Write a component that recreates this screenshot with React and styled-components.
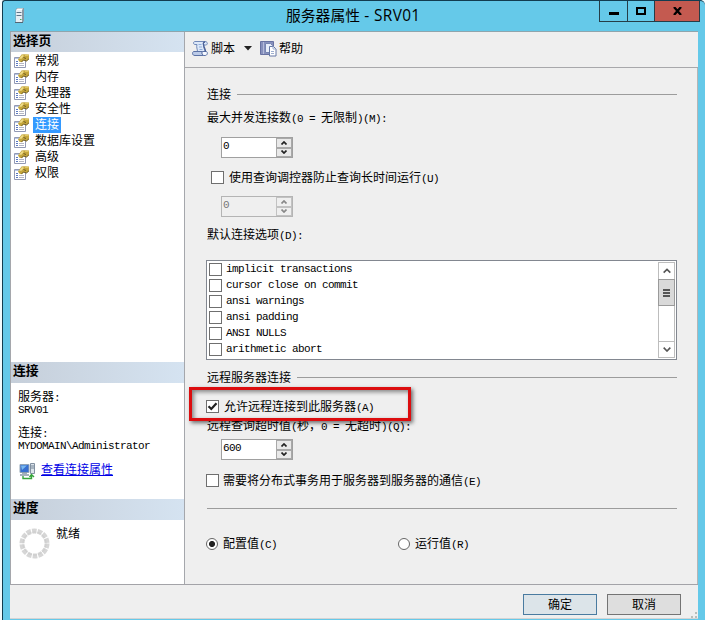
import React from "react";
import styled, { createGlobalStyle, css } from "styled-components";

const GlobalStyle = createGlobalStyle`
  * { box-sizing: border-box; }
  body { margin: 0; background: #f4fbfd; overflow: hidden; }
`;

const Window = styled.div`
  width: 703px;
  height: 620px;
  margin-left: 2px;
  display: flex;
  flex-direction: column;
  background: #65c9e9;
  border-top: 1px solid #123c50;
  border-left: 1px solid #123c50;
  border-top-left-radius: 3px;
  border-top-right-radius: 5px;
  font: 12px/16px "Liberation Mono", "Noto Sans CJK SC", monospace;
  color: #000;
`;

const TitleBar = styled.header`
  height: 30px;
  flex: none;
  display: flex;
  align-items: flex-start;
`;

const ServerIconBox = styled.div`
  width: 26px;
  padding: 6px 0 0 11px;
  flex: none;
`;

const Title = styled.h1`
  margin: 0;
  flex: 1;
  padding-left: 257px;
  font: 400 14.8px/28px "Open Sans", "Noto Sans CJK SC", sans-serif;
  white-space: pre;
`;

const TitleLatin = styled.span`
  font-size: 15.4px;
  letter-spacing: 0.35px;
`;

const WindowButtons = styled.div`
  display: flex;
  width: 101px;
  height: 21px;
  margin-right: 5px;
  border: 1px solid #253d47;
  border-top: 0;
`;

const WindowButton = styled.button`
  width: ${(p) => p.$width}px;
  padding: 0;
  border: 0;
  border-left: ${(p) => (p.$first ? "0" : "1px solid #253d47")};
  background: ${(p) => (p.$danger ? "#c45a50" : "transparent")};
  display: flex;
  align-items: center;
  justify-content: center;
`;

const Client = styled.div`
  width: 688px;
  height: 588px;
  margin-left: 7px;
  display: flex;
  flex-direction: column;
  background: #efefef;
  border-top: 1px solid #8fa5ad;
  border-bottom: 1px solid #d4d4d4;
`;

const Body = styled.div`
  height: 553px;
  display: flex;
  border-bottom: 1px solid #a3a3a8;
`;

const Sidebar = styled.aside`
  width: 175px;
  flex: none;
  background: #fff;
  border: solid #a5a7ac;
  border-width: 0 1px;
  display: flex;
  flex-direction: column;
`;

const SectionHeader = styled.h2`
  margin: 0;
  height: ${(p) => p.$height || 21}px;
  flex: none;
  padding-left: 2px;
  font: 700 12.8px/16px "Noto Sans CJK SC", sans-serif;
  background: linear-gradient(90deg, #c6cfda, #d5e3f1);
`;

const PageList = styled.ul`
  list-style: none;
  margin: 0;
  padding: 1px 0 0 3px;
  height: 310px;
  flex: none;
`;

const PageItem = styled.li`
  display: flex;
  align-items: center;
  height: 16px;
  gap: 3px;
`;

const PageName = styled.span`
  padding: 0 2px;
  height: 16px;
  line-height: 18px;
  ${(p) => p.$selected && css`background: #3399ff; color: #fff;`}
`;

const ConnectionInfo = styled.div`
  height: 116px;
  flex: none;
  padding: 9px 0 0 7px;
  line-height: 12px;
`;

const InfoBlock = styled.div`
  display: flex;
  flex-direction: column;
  height: 36px;
`;

const InfoLine = styled.div`
  height: 12px;
  white-space: nowrap;
`;

const LinkRow = styled.div`
  display: flex;
  align-items: center;
  gap: 5px;
  height: 18px;
  margin: -2px 0 0 1px;
`;

const PropertiesLink = styled.a`
  color: #0000e6;
  line-height: 14px;
  text-decoration: underline;
  text-underline-offset: 1px;
`;

const Progress = styled.div`
  display: flex;
  padding: 8px 0 0 8px;
  gap: 5px;
  line-height: 15px;
`;

const ProgressIcon = styled.div`
  width: 32px;
`;

const Main = styled.main`
  width: 513px;
  display: flex;
  flex-direction: column;
`;

const Toolbar = styled.div`
  height: 36px;
  flex: none;
  border-bottom: 1px solid #a8a8ab;
  display: flex;
  align-items: center;
  padding: 0 0 3px 7px;
`;

const ToolLabel = styled.span`
  margin: 0 9px 0 2px;
  padding-top: 3px;
`;

const ToolIcon = styled.span`
  display: flex;
  margin-right: ${(p) => p.$after || 0}px;
`;

const Form = styled.form`
  position: relative;
  flex: 1;
  border-right: 1px solid #b5b5b5;
  padding: 16px 20px 0 21px;
`;

const Legend = styled.div`
  display: flex;
  align-items: center;
  gap: 5px;
  height: 20px;
  margin-top: ${(p) => p.$top || 0}px;
  padding-left: 1px;
`;

const LegendText = styled.span`
  padding: 3px 1px 0 0;
`;

const Rule = styled.div`
  flex: 1;
  height: 1px;
  background: #9c9c9c;
`;

const Divider = styled.div`
  height: 1px;
  margin: 18px 0 0 1px;
  background: #9c9c9c;
`;

const Label = styled.div`
  height: 20px;
  margin-top: ${(p) => p.$top || 0}px;
  padding-left: 1px;
  line-height: 22px;
  white-space: pre;
`;

const SpinBox = styled.div`
  display: flex;
  justify-content: space-between;
  width: 72px;
  height: 21px;
  margin: ${(p) => p.$top}px 0 0 15px;
  border: 1px solid ${(p) => (p.$disabled ? "#b4b4b4" : "#a0a0a0")};
  background: ${(p) => (p.$disabled ? "#efefef" : "#fff")};
  color: ${(p) => (p.$disabled ? "#777" : "#000")};
  padding-left: 1px;
  line-height: 16px;
`;

const SpinButtons = styled.div`
  display: flex;
  flex-direction: column;
  width: 16px;
`;

const SpinButton = styled.button`
  flex: 1;
  padding: 0;
  border: 1px solid ${(p) => (p.$disabled ? "#c2c2c2" : "#a9a9a9")};
  background: ${(p) => (p.$disabled ? "#efefef" : "#e9e9e9")};
  display: flex;
  align-items: center;
  justify-content: center;
`;

const CheckRow = styled.label`
  display: flex;
  align-items: center;
  height: 19px;
  gap: ${(p) => p.$gap || 4}px;
  margin: ${(p) => p.$top}px 0 0 ${(p) => p.$indent || 0}px;
  white-space: pre;
`;

const Caption = styled.span`
  padding-top: 2px;
`;

const Box = styled.span`
  width: 13px;
  height: 13px;
  flex: none;
  border: 1px solid #6f6f6f;
  background: #fff;
  display: flex;
  align-items: center;
  justify-content: center;
`;

const ListBox = styled.div`
  height: 100px;
  margin-top: 15px;
  border: 1px solid #828790;
  background: #fff;
  display: flex;
  justify-content: space-between;
  padding: 0 1px 0 2px;
`;

const Options = styled.div`
  display: flex;
  flex-direction: column;
`;

const Option = styled.label`
  height: 16px;
  display: flex;
  align-items: center;
  gap: 4px;
  line-height: 14px;
`;

const OptionText = styled.span`
  padding-bottom: 1px;
`;

const ScrollBar = styled.div`
  width: 17px;
  height: 96px;
  margin-top: 1px;
  border: 1px solid #bdbdbd;
  display: flex;
  flex-direction: column;
  justify-content: space-between;
`;

const ScrollArrow = styled.button`
  height: 16px;
  padding: 0;
  border: 0;
  border-top: ${(p) => (p.$down ? "1px solid #bdbdbd" : "0")};
  background: #fff;
  display: flex;
  align-items: center;
  justify-content: center;
`;

const ScrollThumb = styled.div`
  height: 27px;
  margin: 0 -1px 35px;
  border: 1px solid #9a9a9a;
  background: #d9d9d9;
  display: flex;
  align-items: center;
  justify-content: center;
`;

const Highlight = styled.div`
  position: absolute;
  left: 4px;
  top: 319px;
  width: 222px;
  height: 34px;
  border: 3px solid #dc0d0f;
  box-shadow: 2px 2px 4px rgba(0, 0, 0, 0.55), inset 2px 2px 4px rgba(0, 0, 0, 0.45);
`;

const Radios = styled.div`
  display: flex;
  height: 20px;
  margin-top: 25px;
`;

const RadioOption = styled.label`
  display: flex;
  align-items: center;
  width: 192px;
  gap: 5px;
`;

const RadioCircle = styled.span`
  width: 12px;
  height: 12px;
  border: 1px solid #666;
  border-radius: 50%;
  background: ${(p) => (p.$on ? "radial-gradient(circle, #222 0 2.6px, #fff 3.5px)" : "#fff")};
`;

const Footer = styled.footer`
  flex: 1;
  display: flex;
  justify-content: flex-end;
  gap: 10px;
  padding: 9px 1px 0 0;
`;

const DialogButton = styled.button`
  width: 74px;
  height: 21px;
  padding: 3px 0 0;
  border: 1px solid ${(p) => (p.$primary ? "#4a7ba0" : "#747474")};
  background: ${(p) => (p.$primary ? "#dce4e9" : "#dedede")};
  font: inherit;
  line-height: 16px;
`;

const Grip = styled.svg`
  width: 6px;
  height: 6px;
  align-self: flex-end;
`;

const Half = styled.span`
  font-family: "Liberation Mono", monospace;
  font-size: 11px;
  letter-spacing: -0.6px;
  white-space: pre;
`;

// Sets Latin runs at exactly half the width of a Chinese character.
const Text = ({ children }) =>
  children
    .split(/([\x20-\x7e]+)/)
    .filter(Boolean)
    .map((run, i) =>
      /^[\x20-\x7e]/.test(run) ? <Half key={i}>{run}</Half> : <React.Fragment key={i}>{run}</React.Fragment>
    );

const Chevron = ({ down, color = "#333", width = 6, stroke = 1.7 }) => (
  <svg width={width} height={width * 0.67} viewBox="0 0 6 4" fill="none" stroke={color} strokeWidth={stroke}>
    <path d={down ? "M.5.5 3 3 5.5.5" : "M.5 3.5 3 1 5.5 3.5"} />
  </svg>
);

const Spinner = ({ value, disabled, top }) => (
  <SpinBox $disabled={disabled} $top={top}>
    <Text>{value}</Text>
    <SpinButtons>
      <SpinButton type="button" $disabled={disabled}>
        <Chevron color={disabled ? "#888" : "#222"} />
      </SpinButton>
      <SpinButton type="button" $disabled={disabled}>
        <Chevron down color={disabled ? "#888" : "#222"} />
      </SpinButton>
    </SpinButtons>
  </SpinBox>
);

const Check = ({ checked, children, ...layout }) => (
  <CheckRow {...layout}>
    <Box>
      {checked && (
        <svg width="11" height="11" viewBox="0 0 11 11" fill="none" stroke="#222" strokeWidth="2.2">
          <path d="M1.5 5.2 4.3 8 9.5 2.2" />
        </svg>
      )}
    </Box>
    <Caption><Text>{children}</Text></Caption>
  </CheckRow>
);

const ServerIcon = () => (
  <svg width="11" height="17" viewBox="0 0 11 17">
    <path d="M1.5 3 3 1h7v13l-2 2H1.5z" fill="#8798a5" />
    <path d="M2 3h6v12H2z" fill="#e6eef4" />
    <path d="M2 3 3.5 1.5H9L8 3z" fill="#fff" />
    <path d="M2.5 5.5h5M2.5 8.5h5" stroke="#5f7488" />
    <path d="M6 12.5h1.5" stroke="#44a260" />
    <path d="M1 15.5h8" stroke="#536674" />
  </svg>
);

const PageIcon = () => (
  <svg width="16" height="16" viewBox="0 0 16 16">
    <path d="M.5 4.5h11v10H.5z" fill="#fff" stroke="#9299b4" />
    <path d="M1 5.5h7" stroke="#b6c6e5" />
    <path d="M2 8.5h2M2 10.5h2M2 12.5h2" stroke="#5a78c0" />
    <path d="M5 10.5h5M5 12.5h5" stroke="#b5b7c4" />
    <path d="M4 6.5 7.5 1.5 10 1.2 15 1.5v4.3L12.5 8 10 7 7.5 9.2 5.5 8.8z" fill="#c4a63c" />
    <path d="M5 5.8 8 2l2 .8-2.5 3z" fill="#efdc88" />
    <path d="M11 2.3h3.5" stroke="#e8d06c" />
    <path d="M7.5 9 9.5 7l3 1L15 5.8M9.5 4.5 12 5.5" fill="none" stroke="#6b5920" />
  </svg>
);

const ScriptIcon = () => (
  <svg width="17" height="17" viewBox="0 0 17 17">
    <path d="M3 1.5h10c3 0 3 3.5.7 3.5H11.5c-.5 2 1.5 4.5 1.5 7H5.5C5.5 9 4 7 5 4.5H3c-2 0-2-3 0-3z" fill="#dce8f9" stroke="#7189b8" />
    <path d="M1.5 11.5h9c-1 2 0 4 2 4H3c-3 0-3-3-1.5-4z" fill="#bccbe8" stroke="#5b72a5" />
    <path d="M10.5 11.5h4c1.5 1 1 4-1.5 4h-1.2c-1.8-.5-2.3-2.5-1.3-4z" fill="#f6f9ff" stroke="#5b72a5" />
    <path d="M13 2c-2 0-2 2-1.3 3 0 2.3 1.8 4 1.8 6.5" stroke="#485f96" fill="none" strokeWidth="1.3" />
    <path d="M6.5 4.5h3M7 7h3M7.5 9.5h3" stroke="#91aedb" />
  </svg>
);

const HelpIcon = () => (
  <svg width="17" height="17" viewBox="0 0 17 17">
    <path d="M.5 1.5h13v13H.5z" fill="#8791bd" stroke="#6872a2" />
    <path d="M3.5 2v12" stroke="#b4bbdb" />
    <path d="M5.5 3.5h5l2 2v7h-7z" fill="#e8eefa" stroke="#7786b2" />
    <path d="M9.5 6.5h4l2.5 2.5v7H9.5z" fill="#fff" stroke="#6679a6" />
    <path d="M13 6.5V9h3M11 11.5h3M11 13.5h3" fill="none" stroke="#9eafd0" />
  </svg>
);

const NetworkIcon = () => (
  <svg width="17" height="17" viewBox="0 0 17 17">
    <path d="M1 1.5h9v8H1z" fill="#376fd0" stroke="#91a4b7" />
    <path d="M2 2.5h6L3 7z" fill="#79b8ef" />
    <path d="M3 10h5M1 12h9" stroke="#8797a6" strokeWidth="1.5" />
    <path d="M11.5.5h4v10h-4z" fill="#dce4eb" stroke="#8290a0" />
    <path d="M12 3h3M12 5h3" stroke="#728396" />
    <path d="M4 13v2.5h8.5V12m-2 2 2-2.5 2.5 2.5" fill="none" stroke="#35a43b" strokeWidth="1.4" />
  </svg>
);

const Ring = () => (
  <svg width="31" height="31" viewBox="0 0 31 31" fill="none">
    <circle cx="15.5" cy="15.5" r="12.5" stroke="#d6d6d6" strokeWidth="5" strokeDasharray="4.5 1.11" />
    <circle cx="15.5" cy="15.5" r="11.5" stroke="#cdcdcd" strokeWidth="1" strokeDasharray="4.13 1.03" />
  </svg>
);

const pages = ["常规", "内存", "处理器", "安全性", "连接", "数据库设置", "高级", "权限"];
const options = ["implicit transactions", "cursor close on commit", "ansi warnings", "ansi padding", "ANSI NULLS", "arithmetic abort"];

export default function App() {
  return (
    <>
      <GlobalStyle />
      <Window>
        <TitleBar>
          <ServerIconBox><ServerIcon /></ServerIconBox>
          <Title>服务器属性<TitleLatin> - SRV01</TitleLatin></Title>
          <WindowButtons>
            <WindowButton $first $width={27}>
              <svg width="10" height="11"><path d="M0 7.5h10" stroke="#000" strokeWidth="3" /></svg>
            </WindowButton>
            <WindowButton $width={27}>
              <svg width="10" height="8"><path d="M1 1h8v6H1z" fill="none" stroke="#000" strokeWidth="2" /></svg>
            </WindowButton>
            <WindowButton $danger $width={45}>
              <svg width="9" height="8"><path d="m1 0 7 8M8 0 1 8" stroke="#000" strokeWidth="2.3" /></svg>
            </WindowButton>
          </WindowButtons>
        </TitleBar>
        <Client>
          <Body>
            <Sidebar>
              <SectionHeader $height={20}>选择页</SectionHeader>
              <PageList>
                {pages.map((name, i) => (
                  <PageItem key={name}>
                    <PageIcon />
                    <PageName $selected={i === 4}>{name}</PageName>
                  </PageItem>
                ))}
              </PageList>
              <SectionHeader>连接</SectionHeader>
              <ConnectionInfo>
                <InfoBlock>
                  <InfoLine><Text>服务器:</Text></InfoLine>
                  <InfoLine><Text>SRV01</Text></InfoLine>
                </InfoBlock>
                <InfoBlock>
                  <InfoLine><Text>连接:</Text></InfoLine>
                  <InfoLine><Text>MYDOMAIN\Administrator</Text></InfoLine>
                </InfoBlock>
                <LinkRow>
                  <NetworkIcon />
                  <PropertiesLink>查看连接属性</PropertiesLink>
                </LinkRow>
              </ConnectionInfo>
              <SectionHeader>进度</SectionHeader>
              <Progress>
                <ProgressIcon><Ring /></ProgressIcon>
                <span>就绪</span>
              </Progress>
            </Sidebar>
            <Main>
              <Toolbar>
                <ToolIcon><ScriptIcon /></ToolIcon>
                <ToolLabel>脚本</ToolLabel>
                <ToolIcon $after={8}>
                  <svg width="8" height="5"><path d="M0 0h8L4 4.5z" fill="#222" /></svg>
                </ToolIcon>
                <ToolIcon><HelpIcon /></ToolIcon>
                <ToolLabel>帮助</ToolLabel>
              </Toolbar>
              <Form>
                <Legend><LegendText>连接</LegendText><Rule /></Legend>
                <Label $top={4}><Text>最大并发连接数(0 = 无限制)(M):</Text></Label>
                <Spinner value="0" top={9} />
                <Check $top={10} $indent={5} $gap={5}>使用查询调控器防止查询长时间运行(U)</Check>
                <Spinner value="0" disabled top={9} />
                <Label $top={8}><Text>默认连接选项(D):</Text></Label>
                <ListBox>
                  <Options>
                    {options.map((name) => (
                      <Option key={name}>
                        <Box />
                        <OptionText><Text>{name}</Text></OptionText>
                      </Option>
                    ))}
                  </Options>
                  <ScrollBar>
                    <ScrollArrow type="button"><Chevron width={8} stroke={1.2} color="#555" /></ScrollArrow>
                    <ScrollThumb>
                      <svg width="7" height="8"><path d="M0 1h7M0 4h7M0 7h7" stroke="#555" strokeWidth="2" /></svg>
                    </ScrollThumb>
                    <ScrollArrow type="button" $down><Chevron down width={8} stroke={1.2} color="#555" /></ScrollArrow>
                  </ScrollBar>
                </ListBox>
                <Legend $top={7}><LegendText>远程服务器连接</LegendText><Rule /></Legend>
                <Check checked $top={10} $gap={5}>允许远程连接到此服务器(A)</Check>
                <Label><Text>远程查询超时值(秒，0 = 无超时)(Q):</Text></Label>
                <Spinner value="600" top={3} />
                <Check $top={11}>需要将分布式事务用于服务器到服务器的通信(E)</Check>
                <Divider />
                <Radios>
                  <RadioOption><RadioCircle $on /><Caption><Text>配置值(C)</Text></Caption></RadioOption>
                  <RadioOption><RadioCircle /><Caption><Text>运行值(R)</Text></Caption></RadioOption>
                </Radios>
                <Highlight />
              </Form>
            </Main>
          </Body>
          <Footer>
            <DialogButton $primary>确定</DialogButton>
            <DialogButton>取消</DialogButton>
            <Grip viewBox="0 0 6 6"><path d="M0 4h2v2H0zM4 4h2v2H4zM4 0h2v2H4z" fill="#b9beb9" /></Grip>
          </Footer>
        </Client>
      </Window>
    </>
  );
}
